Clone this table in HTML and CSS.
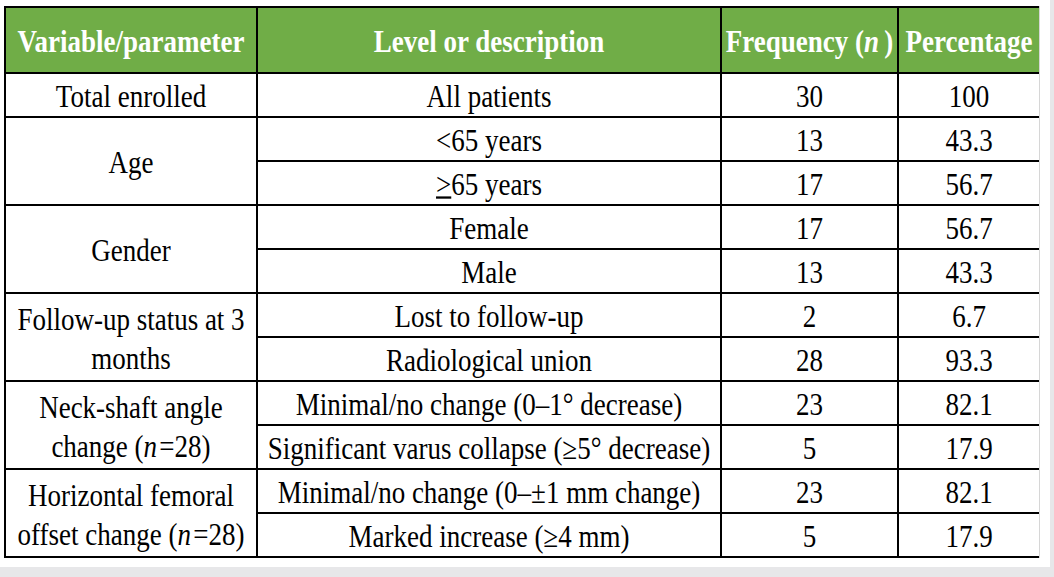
FILE: index.html
```html
<!DOCTYPE html>
<html lang="en">
<head>
<meta charset="utf-8">
<title>Patient characteristics</title>
<link rel="stylesheet" href="styles.css">
</head>
<body>
<div class="page">
  <div class="grid">
    <div class="c h"><span class="t">Variable/parameter</span></div>
    <div class="c h"><span class="t">Level or description</span></div>
    <div class="c h"><span class="t">Frequency (<i>n</i>&#8201;)</span></div>
    <div class="c h"><span class="t">Percentage</span></div>

    <div class="c v"><span class="t">Total enrolled</span></div>
    <div class="c"><span class="t">All patients</span></div>
    <div class="c"><span class="t">30</span></div>
    <div class="c"><span class="t">100</span></div>

    <div class="c v s2"><span class="t">Age</span></div>
    <div class="c"><span class="t">&lt;65 years</span></div>
    <div class="c"><span class="t">13</span></div>
    <div class="c"><span class="t">43.3</span></div>
    <div class="c"><span class="t"><u class="ge">&gt;</u>65 years</span></div>
    <div class="c"><span class="t">17</span></div>
    <div class="c"><span class="t">56.7</span></div>

    <div class="c v s2"><span class="t">Gender</span></div>
    <div class="c"><span class="t">Female</span></div>
    <div class="c"><span class="t">17</span></div>
    <div class="c"><span class="t">56.7</span></div>
    <div class="c"><span class="t">Male</span></div>
    <div class="c"><span class="t">13</span></div>
    <div class="c"><span class="t">43.3</span></div>

    <div class="c v s2"><span class="t">Follow-up status at 3<br>months</span></div>
    <div class="c"><span class="t">Lost to follow-up</span></div>
    <div class="c"><span class="t">2</span></div>
    <div class="c"><span class="t">6.7</span></div>
    <div class="c"><span class="t">Radiological union</span></div>
    <div class="c"><span class="t">28</span></div>
    <div class="c"><span class="t">93.3</span></div>

    <div class="c v s2"><span class="t">Neck-shaft angle<br>change (<i>n</i>&#8202;=28)</span></div>
    <div class="c"><span class="t">Minimal/no change (0–1° decrease)</span></div>
    <div class="c"><span class="t">23</span></div>
    <div class="c"><span class="t">82.1</span></div>
    <div class="c"><span class="t">Significant varus collapse (≥5° decrease)</span></div>
    <div class="c"><span class="t">5</span></div>
    <div class="c"><span class="t">17.9</span></div>

    <div class="c v s2"><span class="t">Horizontal femoral<br>offset change (<i>n</i>&#8202;=28)</span></div>
    <div class="c"><span class="t">Minimal/no change (0–±1 mm change)</span></div>
    <div class="c"><span class="t">23</span></div>
    <div class="c"><span class="t">82.1</span></div>
    <div class="c"><span class="t">Marked increase (≥4 mm)</span></div>
    <div class="c"><span class="t">5</span></div>
    <div class="c"><span class="t">17.9</span></div>
  </div>
</div>
</body>
</html>
```

FILE: styles.css
```css
html, body {
  margin: 0;
  padding: 0;
}
body {
  background: #e7e7e9;
  font-family: "Liberation Serif", "Times New Roman", serif;
  color: #000;
}
.page {
  width: 1050px;
  height: 567px;
  box-sizing: border-box;
  background: #fff;
  padding: 6px 0 0 4px;
}
.grid {
  display: grid;
  grid-template-columns: 250px 462px 175px 140px;
  grid-template-rows: 64px repeat(11, 42px);
  gap: 2px;
  padding: 2px 0 2px 2px;
  background: #000;
  border-right: 1px solid #d6d6d6;
  width: max-content;
}
.c {
  background: #fff;
  display: flex;
  align-items: center;
  justify-content: center;
  font-size: 27px;
  padding-top: 3px;
  overflow: visible;
}
.h {
  background: #70ad47;
  color: #fff;
  font-weight: bold;
}
.v {
  grid-column: 1;
}
.s2 {
  grid-row: span 2;
}
.t {
  display: inline-block;
  text-align: center;
  white-space: nowrap;
  line-height: 34px;
  transform: scaleY(1.14);
}
.t i {
  font-style: italic;
}
.ge {
  text-decoration: underline;
  text-underline-offset: 1px;
}
```
